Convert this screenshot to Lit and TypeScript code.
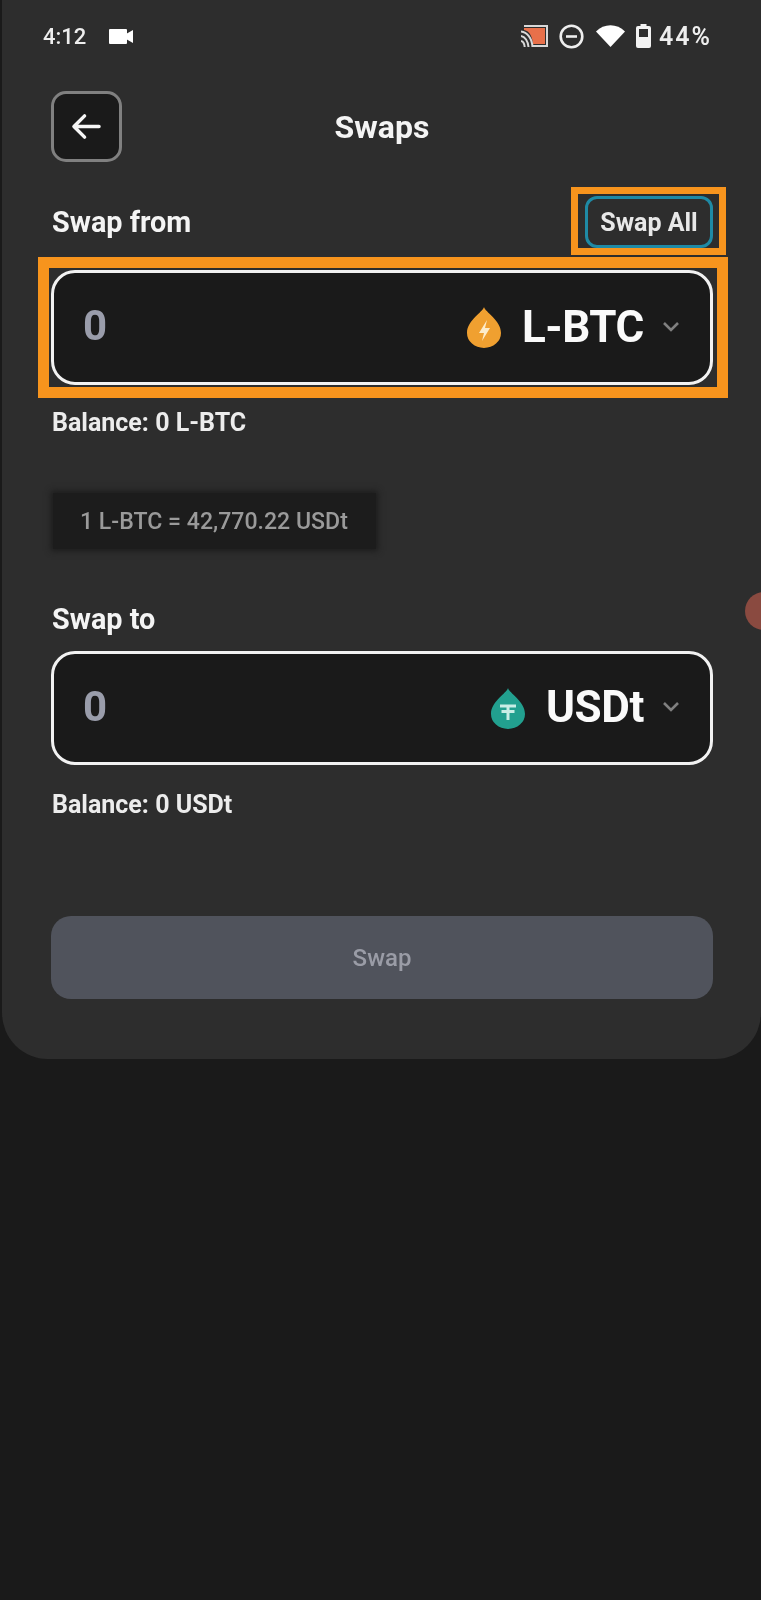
import { LitElement, html, css, svg } from 'lit';
import { customElement } from 'lit/decorators.js';

const chevron = html`<svg class="chevron" viewBox="0 0 18 12" fill="none" stroke="#808080" stroke-width="2.6">
  <path d="M2 2l7 7 7-7" />
</svg>`;

const drop = svg`<path d="M18 1C17 6 1 14 1 27a17 15 0 0 0 34 0C35 14 19 6 18 1z" />`;

@customElement('app-root')
export class AppRoot extends LitElement {
  static styles = css`
    :host {
      display: block;
      position: relative;
      min-height: 1600px;
      background: #1a1a1a;
      font-family: Roboto, 'Liberation Sans', sans-serif;
      color: #f4f4f4;
      overflow: hidden;
    }

    .panel {
      margin-left: 2px;
      padding: 0 48px 60px 49px;
      background: #2d2d2d;
      border-radius: 0 0 46px 46px;
      filter: blur(0.6px);
    }

    .status {
      height: 72px;
      margin: 0 -1px 0 -8px;
      padding-right: 2px;
      display: flex;
      align-items: center;
      font-size: 22px;
      font-weight: 500;
      color: #eeeeee;
    }

    .status .time {
      margin-right: 23px;
    }

    .status .right {
      margin-left: auto;
      display: flex;
      align-items: center;
    }

    .status .pct {
      margin-left: 8px;
      font-size: 25px;
      font-weight: 600;
      letter-spacing: 2px;
    }

    .cast { width: 27px; height: 23px; }
    .dnd { width: 25px; height: 25px; margin-left: 11px; }
    .wifi { width: 29px; height: 22px; margin-left: 12px; }
    .battery { width: 15px; height: 24px; margin-left: 11px; }
    .video { width: 24px; height: 15px; }

    .header {
      margin-top: 19px;
      position: relative;
      display: flex;
      align-items: center;
      justify-content: center;
      height: 71px;
    }

    .back {
      position: absolute;
      left: 0;
      top: 0;
      box-sizing: border-box;
      width: 71px;
      height: 71px;
      display: flex;
      align-items: center;
      justify-content: center;
      background: #1a1a1a;
      border: 3px solid #808080;
      border-radius: 15px;
    }

    .back svg { width: 31px; height: 27px; }

    .title {
      font-size: 32px;
      font-weight: 700;
    }

    .label-row {
      margin-top: 34px;
      display: flex;
      align-items: center;
      justify-content: space-between;
      height: 52px;
    }

    .label {
      font-size: 28.8px;
      font-weight: 700;
      line-height: 30px;
      padding-left: 1px;
    }

    .swap-all {
      position: relative;
      box-sizing: border-box;
      width: 128px;
      height: 52px;
      display: flex;
      align-items: center;
      justify-content: center;
      border: 3px solid #1f8aa5;
      border-radius: 12px;
      font-size: 25px;
      font-weight: 700;
      color: #e8e8e8;
    }

    .swap-all::after {
      content: '';
      position: absolute;
      inset: -12px -16px -10px -17px;
      border: 7px solid #f7941d;
    }

    .field {
      position: relative;
      box-sizing: border-box;
      display: flex;
      align-items: center;
      background: #1a1a1a;
      border: 3.5px solid #f2f2f2;
      border-radius: 24px;
      padding: 0 30px 2px 29px;
    }

    .field.from {
      margin-top: 22px;
      height: 115px;
    }

    .field.from::after {
      content: '';
      position: absolute;
      inset: -16px -18px -16px -16px;
      border: 11px solid #f7941d;
    }

    .field.to {
      margin-top: 17px;
      height: 114px;
    }

    .amount {
      font-size: 42px;
      font-weight: 700;
      color: #9a9dab;
      margin-bottom: 2px;
    }

    .asset {
      margin-left: auto;
      display: flex;
      align-items: center;
      font-size: 44px;
      font-weight: 700;
      letter-spacing: -0.4px;
      color: #fafafa;
    }

    .asset .coin {
      width: 36px;
      height: 42px;
      margin-right: 20px;
    }

    .asset .coin.usdt {
      height: 44px;
      margin-top: 2px;
    }

    .chevron {
      width: 18px;
      height: 12px;
      margin-left: 18px;
    }

    .balance {
      margin-top: 23px;
      padding-left: 1px;
      font-size: 25px;
      font-weight: 700;
      line-height: 30px;
      color: #ececec;
    }

    .balance.second { margin-top: 25px; }

    .rate {
      margin: 55px 0 0 2px;
      box-sizing: border-box;
      width: 323px;
      height: 56px;
      display: flex;
      align-items: center;
      padding-left: 27px;
      background: #1c1c1c;
      box-shadow: 0 0 6px 2px #1c1c1c;
      font-size: 23.1px;
      font-weight: 500;
      color: #9a9a9a;
    }

    .section {
      margin-top: 55px;
    }

    .swap-btn {
      margin-top: 96px;
      height: 83px;
      display: flex;
      align-items: center;
      justify-content: center;
      background: #50535c;
      border-radius: 20px;
      font-size: 24px;
      font-weight: 500;
      color: #9a9ca6;
    }

    .dot {
      position: absolute;
      left: 745px;
      top: 592px;
      width: 38px;
      height: 38px;
      border-radius: 50%;
      background: #8a4a40;
      filter: blur(0.6px);
    }
  `;

  render() {
    return html`
      <div class="panel">
        <div class="status">
          <span class="time">4:12</span>
          <svg class="video" viewBox="0 0 24 15" fill="#ffffff">
            <rect x="0" y="0" width="18" height="15" rx="1" />
            <path d="M17 5L24 1v13l-7-4z" />
          </svg>
          <div class="right">
            <svg class="cast" viewBox="0 0 27 23">
              <path d="M3 1h23v20H11" fill="none" stroke="#d8d8d8" stroke-width="2" />
              <path d="M3 3h21v16H12C11 10 8 6 3 5z" fill="#e8704a" />
              <path d="M0 6.500C6 7 11 13 11.500 22M0 11c4 .5 7 5 7.500 11M0 16c2 .5 3.500 3 3.700 6" fill="none" stroke="#d8d8d8" stroke-width="2" />
            </svg>
            <svg class="dnd" viewBox="0 0 25 25" fill="none" stroke="#eeeeee" stroke-width="2.6">
              <circle cx="12.500" cy="12.500" r="10.800" />
              <path d="M7 12.500h11" />
            </svg>
            <svg class="wifi" viewBox="0 0 29 22" fill="#ffffff">
              <path d="M0 6.500C8-2 21-2 29 6.500L14.500 22z" />
            </svg>
            <svg class="battery" viewBox="0 0 15 24">
              <path d="M4.500 0h6v2H13a2 2 0 0 1 2 2v18a2 2 0 0 1-2 2H2a2 2 0 0 1-2-2V4a2 2 0 0 1 2-2h2.500z" fill="#f2f2f2" />
              <rect x="3" y="5" width="9" height="8" fill="#2d2d2d" />
            </svg>
            <span class="pct">44%</span>
          </div>
        </div>

        <div class="header">
          <div class="back">
            <svg viewBox="0 0 32 28" fill="none" stroke="#f6f6f6" stroke-width="3.6" stroke-linecap="round" stroke-linejoin="round">
              <path d="M29 14H4M14 3L3 14l11 11" />
            </svg>
          </div>
          <span class="title">Swaps</span>
        </div>

        <div class="label-row">
          <span class="label">Swap from</span>
          <div class="swap-all">Swap All</div>
        </div>
        <div class="field from">
          <span class="amount">0</span>
          <div class="asset">
            <svg class="coin" viewBox="0 0 36 42">
              <g fill="#f0a030">${drop}</g>
              <path d="M21 14l-8 13h5l-2 8 8-13h-5z" fill="#fdeccb" />
            </svg>
            L-BTC ${chevron}
          </div>
        </div>
        <div class="balance">Balance: 0 L-BTC</div>

        <div class="rate">1 L-BTC = 42,770.22 USDt</div>

        <div class="section label">Swap to</div>
        <div class="field to">
          <span class="amount">0</span>
          <div class="asset">
            <svg class="coin usdt" viewBox="0 0 36 42">
              <g fill="#22a08f">${drop}</g>
              <path d="M10 19h16M18 19v14M11.500 24.500h13" fill="none" stroke="#c8eee6" stroke-width="3" />
            </svg>
            USDt ${chevron}
          </div>
        </div>
        <div class="balance second">Balance: 0 USDt</div>

        <div class="swap-btn">Swap</div>
      </div>
      <div class="dot"></div>
    `;
  }
}
